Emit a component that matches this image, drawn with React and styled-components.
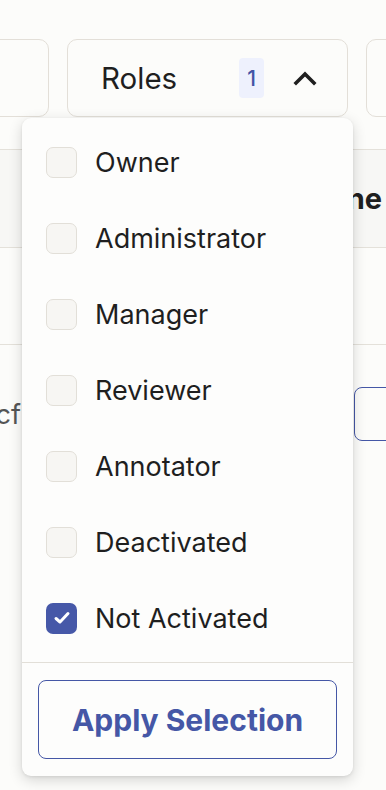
import React, { useState } from "react";
import styled, { createGlobalStyle } from "styled-components";

const GlobalStyle = createGlobalStyle`
  html, body {
    margin: 0;
    padding: 0;
    background: #fcfcfa;
    font-family: "Inter", "Liberation Sans", sans-serif;
    color: #1f1f1f;
  }
  * { box-sizing: border-box; }
`;

const roles = [
  "Owner",
  "Administrator",
  "Manager",
  "Reviewer",
  "Annotator",
  "Deactivated",
  "Not Activated",
];

const Page = styled.div`
  position: relative;
  width: 386px;
  height: 790px;
  overflow: hidden;
  background: #fcfcfa;
`;

const FilterBar = styled.div`
  display: flex;
  gap: 18px;
  padding-top: 39px;
  margin-left: -151px;
`;

const FilterButton = styled.div`
  flex: 0 0 ${(p) => p.$width}px;
  height: 78px;
  border: 1.5px solid #e3dfd8;
  border-radius: 10px;
  background: #fcfcfa;
  display: flex;
  align-items: center;
  padding: 0 30px 0 33px;
  font-size: 29.5px;
  color: #1f1f1f;
`;

const Label = styled.span`
  flex: 1;
`;

const Badge = styled.span`
  width: 25px;
  height: 40px;
  border-radius: 4px;
  background: #eef1fd;
  color: #4254a6;
  font-size: 21px;
  font-weight: 500;
  display: flex;
  align-items: center;
  justify-content: center;
  margin-right: 29px;
`;

const Table = styled.div`
  margin-top: 32px;
  display: flex;
  flex-direction: column;
`;

const Row = styled.div`
  height: ${(p) => p.$height}px;
  border-top: 1.5px solid #e4e1da;
  background: ${(p) => (p.$head ? "#f7f7f5" : "#fcfcfa")};
  display: flex;
  align-items: ${(p) => (p.$top ? "flex-start" : "center")};
  padding-top: ${(p) => (p.$top ? "42px" : "0")};
`;

const HeadCell = styled.div`
  margin-left: 292px;
  font-size: 29px;
  font-weight: 700;
  white-space: nowrap;
`;

const ClipCell = styled.div`
  width: 21px;
  height: 54px;
  overflow: hidden;
  display: flex;
  align-items: center;
  justify-content: flex-end;
  font-size: 27px;
  color: #555;
  white-space: nowrap;
`;

const RowInput = styled.div`
  margin-left: auto;
  width: 160px;
  height: 54px;
  margin-right: -128px;
  border: 1.5px solid #4557a6;
  border-radius: 8px;
`;

const Dropdown = styled.div`
  position: absolute;
  left: 22px;
  top: 118px;
  width: 331px;
  height: 658px;
  background: #fdfdfc;
  border-radius: 9px;
  box-shadow: 0 4px 14px rgba(0, 0, 0, 0.16), 0 1px 3px rgba(0, 0, 0, 0.08);
  display: flex;
  flex-direction: column;
`;

const List = styled.div`
  padding: 6px 0;
  display: flex;
  flex-direction: column;
`;

const Option = styled.label`
  height: 76px;
  display: flex;
  align-items: center;
  gap: 18px;
  padding-left: 24px;
  font-size: 27px;
  color: #1f1f1f;
  cursor: pointer;
`;

const Box = styled.span`
  width: 31px;
  height: 31px;
  border-radius: 7px;
  border: ${(p) => (p.$checked ? "none" : "1.5px solid #e2dfd8")};
  background: ${(p) => (p.$checked ? "#4658a8" : "#f7f6f3")};
  display: flex;
  align-items: center;
  justify-content: center;
`;

const Divider = styled.div`
  height: 1.5px;
  background: #e2dfd8;
`;

const Footer = styled.div`
  padding: 17px 16px;
`;

const ApplyButton = styled.button`
  width: 100%;
  height: 79px;
  border: 1.5px solid #4557a6;
  border-radius: 8px;
  background: #fdfdfc;
  color: #4557a6;
  font-family: "Inter", "Liberation Sans", sans-serif;
  font-size: 30px;
  font-weight: 700;
  cursor: pointer;
`;

const Chevron = () => (
  <svg width="24" height="16" viewBox="0 0 24 16">
    <path d="M3 13 L12 4 L21 13" fill="none" stroke="#1f1f1f" strokeWidth="3.6" strokeLinecap="square" />
  </svg>
);

const Check = () => (
  <svg width="20" height="20" viewBox="0 0 20 20">
    <path d="M4 10.5 L8 14 L16 5.5" fill="none" stroke="#fff" strokeWidth="3" strokeLinecap="round" strokeLinejoin="round" />
  </svg>
);

export default function App() {
  const [checked, setChecked] = useState({ "Not Activated": true });

  return (
    <Page>
      <GlobalStyle />
      <FilterBar>
        <FilterButton $width={200} />
        <FilterButton $width={281}>
          <Label>Roles</Label>
          <Badge>1</Badge>
          <Chevron />
        </FilterButton>
        <FilterButton $width={200} />
      </FilterBar>
      <Table>
        <Row $head $height={98}>
          <HeadCell>Phone</HeadCell>
        </Row>
        <Row $height={97} />
        <Row $top $height={200}>
          <ClipCell>a4cf</ClipCell>
          <RowInput />
        </Row>
      </Table>
      <Dropdown>
        <List>
          {roles.map((r) => (
            <Option key={r} onClick={() => setChecked({ ...checked, [r]: !checked[r] })}>
              <Box $checked={!!checked[r]}>{checked[r] && <Check />}</Box>
              {r}
            </Option>
          ))}
        </List>
        <Divider />
        <Footer>
          <ApplyButton>Apply Selection</ApplyButton>
        </Footer>
      </Dropdown>
    </Page>
  );
}
